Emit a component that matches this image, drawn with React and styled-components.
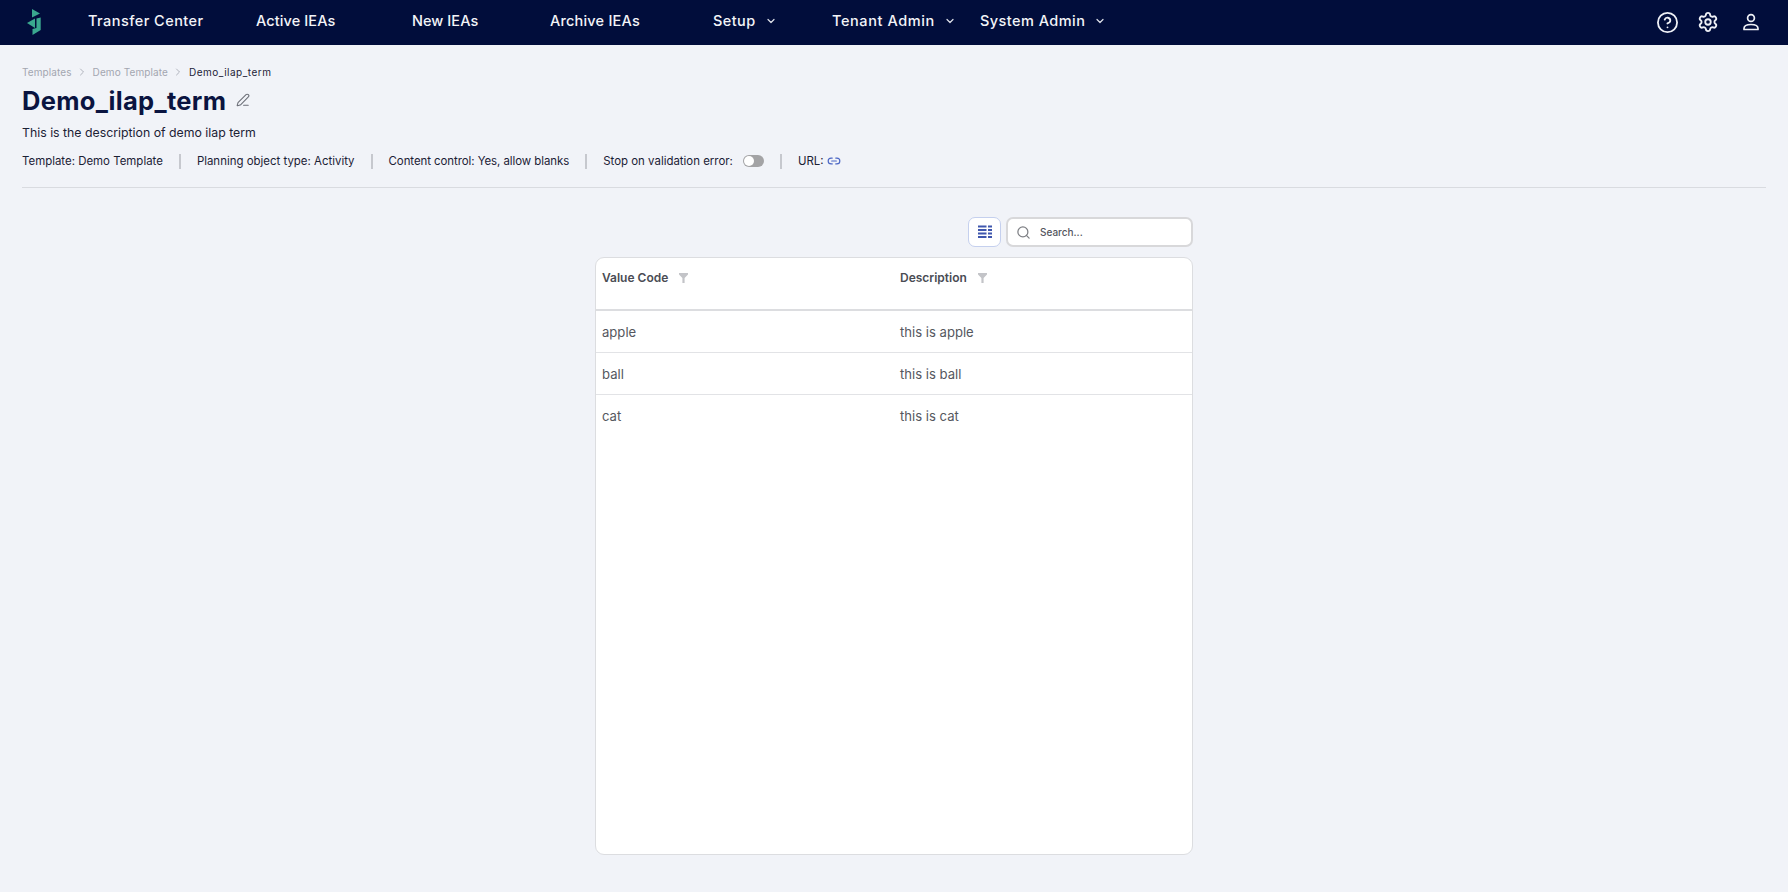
import React from "react";
import styled, { createGlobalStyle } from "styled-components";
import {
  ChevronDown,
  ChevronRight,
  CircleHelp,
  Link2,
  PenLine,
  Search,
  Settings,
} from "lucide-react";

const GlobalStyle = createGlobalStyle`
  html, body {
    margin: 0;
    padding: 0;
    background: #f1f3f8;
    font-family: Inter, "Liberation Sans", sans-serif;
  }
`;

const Page = styled.div`
  width: 1788px;
  height: 892px;
  overflow: hidden;
  display: flex;
  flex-direction: column;
`;

const NavBar = styled.nav`
  height: 45px;
  flex: none;
  box-sizing: border-box;
  padding: 0 15px 1px 27px;
  background: #010d3b;
  display: flex;
  align-items: center;
`;

const LogoBox = styled.div`
  width: 61px;
  display: flex;
  align-items: center;
`;

const NavItem = styled.div`
  width: ${(p) => p.$width}px;
  flex: none;
  display: flex;
  align-items: center;
  gap: 9px;
  margin-bottom: 3px;
  color: #f3f4f8;
  font-size: 14.5px;
  font-weight: 500;
  letter-spacing: ${(p) => p.$spacing}px;
  white-space: nowrap;

  svg {
    color: #dfe2ea;
  }
`;

const NavIcons = styled.div`
  margin-left: auto;
  display: flex;
  align-items: center;
  color: #eef0f6;
`;

const NavIconSlot = styled.div`
  width: ${(p) => p.$width}px;
  display: flex;
  justify-content: center;
`;

const Content = styled.main`
  padding: 20px 22px 0;
  flex: 1;
  display: flex;
  flex-direction: column;
`;

const Crumbs = styled.div`
  display: flex;
  align-items: center;
  gap: 4.5px;
  height: 14px;
  font-size: 10px;
  letter-spacing: 0.1px;
  color: #a3a6b0;

  svg {
    color: #9a9da8;
  }
`;

const CurrentCrumb = styled.span`
  color: #1c2237;
  letter-spacing: 0.5px;
`;

const TitleRow = styled.div`
  display: flex;
  align-items: center;
  gap: 10px;
  margin-top: 6px;
  height: 30px;
  color: #6c6f78;
`;

const Title = styled.h1`
  margin: 0;
  font-size: 25.5px;
  font-weight: 700;
  color: #0a1440;
  letter-spacing: 0.3px;
`;

const Description = styled.p`
  margin: 9px 0 0;
  font-size: 12.3px;
  line-height: 18px;
  color: #1b2135;
`;

const MetaRow = styled.div`
  display: flex;
  align-items: center;
  margin-top: 10px;
  height: 18px;
  font-size: 11.45px;
  color: #1b2135;
  padding-bottom: 17px;
  border-bottom: 1px solid #d9dbe0;
`;

const MetaItem = styled.div`
  display: flex;
  align-items: center;
  gap: 3px;
  letter-spacing: ${(p) => p.$spacing || 0}px;
  white-space: nowrap;

  svg {
    color: #4b66c4;
  }
`;

const MetaDivider = styled.span`
  width: 2px;
  height: 15px;
  margin: 0 16px;
  background: #c6c8ce;
`;

const Toggle = styled.span`
  position: relative;
  display: inline-block;
  width: 21px;
  height: 12px;
  margin-left: 7px;
  border-radius: 6px;
  background: #a3a3a5;

  &::after {
    content: "";
    position: absolute;
    left: 1px;
    top: 1px;
    width: 10px;
    height: 10px;
    border-radius: 50%;
    background: #fff;
  }
`;

const TableWrap = styled.section`
  width: 598px;
  margin: 29px auto 0;
  display: flex;
  flex-direction: column;
`;

const Toolbar = styled.div`
  display: flex;
  justify-content: flex-end;
  gap: 5px;
  height: 30px;
  margin-bottom: 10px;
`;

const ColumnButton = styled.button`
  width: 33px;
  height: 30px;
  padding: 0;
  display: flex;
  align-items: center;
  justify-content: center;
  background: #fff;
  border: 1px solid #c5d0ee;
  border-radius: 7px;
`;

const SearchBox = styled.div`
  width: 187px;
  box-sizing: border-box;
  display: flex;
  align-items: center;
  gap: 9px;
  padding-left: 8px;
  background: #fff;
  border: 2px solid #d8d8da;
  border-radius: 7px;
  color: #7d7f84;
`;

const SearchText = styled.span`
  font-size: 10px;
  font-weight: 500;
  color: #53555e;
`;

const Table = styled.div`
  height: 598px;
  box-sizing: border-box;
  background: #fff;
  border: 1px solid #dcdde0;
  border-radius: 9px;
  overflow: hidden;
`;

const HeaderRow = styled.div`
  display: grid;
  grid-template-columns: 298px 1fr;
  height: 51px;
  border-bottom: 2px solid #dcdde0;
`;

const HeaderCell = styled.div`
  display: flex;
  align-items: center;
  gap: 11px;
  height: 38px;
  padding-left: 6px;
  font-size: 12px;
  font-weight: 600;
  color: #4a4c54;

  svg {
    margin-top: 2px;
  }
`;

const Row = styled.div`
  display: grid;
  grid-template-columns: 298px 1fr;
  align-items: center;
  height: 42px;
  border-bottom: ${(p) => (p.$last ? "none" : "1px solid #e2e3e6")};
  box-sizing: border-box;
`;

const Cell = styled.div`
  padding-left: 6px;
  font-size: 13.1px;
  color: #55575e;
`;

const Logo = () => (
  <svg width="14" height="26" viewBox="0 0 14 26" fill="#3aa88f">
    <path d="M5 0 L13 4.5 L5 8.5 Z" />
    <path d="M0 14 L8 9.5 L8 19 Z" />
    <path d="M9.5 9.5 L13.7 8.5 L13.7 21 L5.5 26 L5.5 20 L9.5 19 Z" />
  </svg>
);

const UserIcon = () => (
  <svg width="20" height="20" viewBox="0 0 20 20" fill="none" stroke="currentColor" strokeWidth="1.7">
    <circle cx="10" cy="6" r="3.4" />
    <path d="M3 17.5 v-1 c0-2.6 2.4-4 7-4 s7 1.4 7 4 v1 Z" strokeLinejoin="round" />
  </svg>
);

const FilterIcon = () => (
  <svg width="9" height="10" viewBox="0 0 9 10" fill="#c3c4c8">
    <path d="M0 0 H9 V1.5 L5.6 5 V10 H3.4 V5 L0 1.5 Z" />
  </svg>
);

const ColumnsIcon = () => (
  <svg width="14" height="14" viewBox="0 0 14 14" fill="#3f56ad">
    <rect x="0" y="0.5" width="8.5" height="2" />
    <rect x="0" y="4" width="8.5" height="2" />
    <rect x="0" y="7.5" width="8.5" height="2" />
    <rect x="0" y="11" width="8.5" height="2" />
    <rect x="10" y="0.5" width="4" height="2" />
    <rect x="10" y="4" width="4" height="2" />
    <rect x="10" y="7.5" width="4" height="2" />
    <rect x="10" y="11" width="4" height="2" />
  </svg>
);

const navItems = [
  { label: "Transfer Center", width: 168, spacing: 0.45 },
  { label: "Active IEAs", width: 156, spacing: 0.1 },
  { label: "New IEAs", width: 138, spacing: 0.05 },
  { label: "Archive IEAs", width: 163, spacing: 0.2 },
  { label: "Setup", width: 119, spacing: 0.4, menu: true },
  { label: "Tenant Admin", width: 148, spacing: 0.6, menu: true },
  { label: "System Admin", width: 140, spacing: 0.45, menu: true },
];

const rows = [
  { code: "apple", text: "this is apple" },
  { code: "ball", text: "this is ball" },
  { code: "cat", text: "this is cat" },
];

export default function App() {
  return (
    <Page>
      <GlobalStyle />
      <NavBar>
        <LogoBox>
          <Logo />
        </LogoBox>
        {navItems.map((item) => (
          <NavItem key={item.label} $width={item.width} $spacing={item.spacing}>
            {item.label}
            {item.menu && <ChevronDown size={12} strokeWidth={2.4} />}
          </NavItem>
        ))}
        <NavIcons>
          <NavIconSlot $width={40}>
            <CircleHelp size={23} strokeWidth={1.9} />
          </NavIconSlot>
          <NavIconSlot $width={42}>
            <Settings size={22} strokeWidth={2} />
          </NavIconSlot>
          <NavIconSlot $width={44}>
            <UserIcon />
          </NavIconSlot>
        </NavIcons>
      </NavBar>
      <Content>
        <Crumbs>
          <span>Templates</span>
          <ChevronRight size={12} strokeWidth={1.5} />
          <span>Demo Template</span>
          <ChevronRight size={12} strokeWidth={1.5} />
          <CurrentCrumb>Demo_ilap_term</CurrentCrumb>
        </Crumbs>
        <TitleRow>
          <Title>Demo_ilap_term</Title>
          <PenLine size={14} strokeWidth={1.8} />
        </TitleRow>
        <Description>This is the description of demo ilap term</Description>
        <MetaRow>
          <MetaItem>Template: Demo Template</MetaItem>
          <MetaDivider />
          <MetaItem>Planning object type: Activity</MetaItem>
          <MetaDivider />
          <MetaItem $spacing={-0.06}>Content control: Yes, allow blanks</MetaItem>
          <MetaDivider />
          <MetaItem>
            Stop on validation error:
            <Toggle />
          </MetaItem>
          <MetaDivider />
          <MetaItem>
            URL:
            <Link2 size={14} strokeWidth={2} />
          </MetaItem>
        </MetaRow>
        <TableWrap>
          <Toolbar>
            <ColumnButton aria-label="Columns">
              <ColumnsIcon />
            </ColumnButton>
            <SearchBox>
              <Search size={15} strokeWidth={2} />
              <SearchText>Search...</SearchText>
            </SearchBox>
          </Toolbar>
          <Table>
            <HeaderRow>
              <HeaderCell>
                Value Code
                <FilterIcon />
              </HeaderCell>
              <HeaderCell>
                Description
                <FilterIcon />
              </HeaderCell>
            </HeaderRow>
            {rows.map((row, i) => (
              <Row key={row.code} $last={i === rows.length - 1}>
                <Cell>{row.code}</Cell>
                <Cell>{row.text}</Cell>
              </Row>
            ))}
          </Table>
        </TableWrap>
      </Content>
    </Page>
  );
}
